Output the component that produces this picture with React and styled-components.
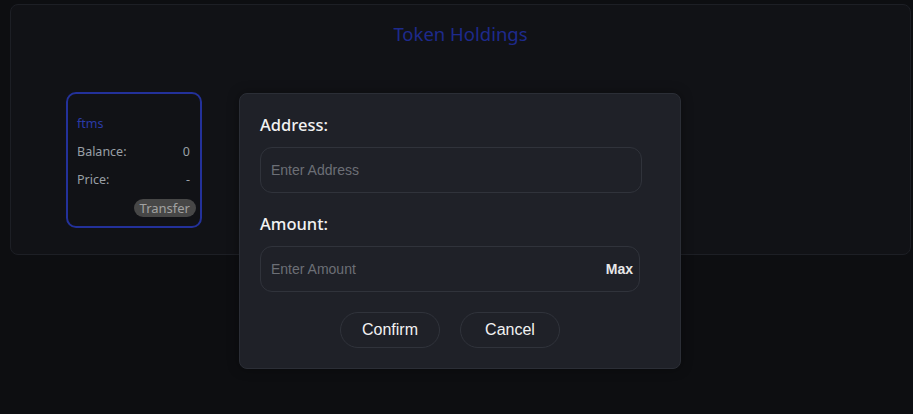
import React from "react";
import styled, { createGlobalStyle } from "styled-components";

const Global = createGlobalStyle`
  html, body { margin: 0; padding: 0; background: #0d0e11; }
  body { width: 913px; height: 414px; overflow: hidden; font-family: "Noto Sans", "Open Sans", sans-serif; }
  * { box-sizing: border-box; }
`;

const Page = styled.div`
  position: relative;
  width: 913px;
  height: 414px;
  padding: 4px 2px 0 10px;
`;

const Panel = styled.section`
  height: 251px;
  background: #111216;
  border: 1px solid #1d1f25;
  border-radius: 8px;
  padding: 15px 0 0 55px;
  display: flex;
  flex-direction: column;
`;

const Title = styled.h2`
  margin: 0 0 0 -55px;
  text-align: center;
  font-family: "Noto Sans", sans-serif;
  font-weight: 400;
  font-size: 18.5px;
  line-height: 28px;
  color: #1e2a8c;
`;

const Grid = styled.div`
  display: flex;
  gap: 20px;
  margin-top: 44px;
`;

const Card = styled.div`
  width: 136px;
  height: 136px;
  border: 2px solid #23319a;
  border-radius: 10px;
  padding: 15px 4px 0 9px;
  display: flex;
  flex-direction: column;
`;

const TokenName = styled.div`
  font-size: 12.5px;
  line-height: 29px;
  color: #2a3aa6;
  padding-right: 6px;
`;

const InfoRow = styled.div`
  display: flex;
  justify-content: space-between;
  font-size: 12.5px;
  line-height: 28px;
  color: #9aa0a6;
  padding-right: 6px;
`;

const ActionRow = styled.div`
  display: flex;
  justify-content: flex-end;
  align-items: center;
  height: 27px;
`;

const SmallButton = styled.button`
  border: none;
  background: #474747;
  color: #a2a2a2;
  font-family: "Noto Sans", sans-serif;
  font-size: 13px;
  line-height: 18px;
  height: 18px;
  padding: 0 6px;
  border-radius: 9px;
`;

const Modal = styled.div`
  position: absolute;
  left: 239px;
  top: 93px;
  width: 442px;
  height: 276px;
  background: #1f2128;
  border: 1px solid #2b2e36;
  border-radius: 8px;
  box-shadow: 0 0 12px rgba(0, 0, 0, 0.35);
  padding: 19px 20px 0 20px;
  display: flex;
  flex-direction: column;
`;

const Label = styled.label`
  font-family: "Noto Sans", sans-serif;
  font-weight: 500;
  font-size: 16.5px;
  line-height: 24px;
  color: #f2f2f2;
  margin-bottom: ${(p) => p.$gap}px;
`;

const Field = styled.div`
  width: ${(p) => p.$width}px;
  height: 46px;
  border: 1px solid #30333b;
  border-radius: 12px;
  display: flex;
  align-items: center;
  padding: 0 6px 0 10px;
  margin-bottom: ${(p) => p.$gap}px;
`;

const Input = styled.input`
  flex: 1;
  min-width: 0;
  background: transparent;
  border: none;
  outline: none;
  color: #e6e6e6;
  caret-color: #e6e6e6;
  font-family: "Liberation Sans", Arial, sans-serif;
  font-size: 14px;
  padding: 0;
  &::placeholder { color: #6c6f76; }
`;

const MaxButton = styled.button`
  background: transparent;
  border: none;
  padding: 0;
  color: #e8e8e8;
  font-family: "Liberation Sans", Arial, sans-serif;
  font-weight: 700;
  font-size: 14px;
`;

const Actions = styled.div`
  width: 380px;
  display: flex;
  justify-content: center;
  gap: 20px;
`;

const PillButton = styled.button`
  width: 100px;
  height: 36px;
  border: 1px solid #30333b;
  border-radius: 18px;
  background: transparent;
  color: #f2f2f2;
  font-family: "Liberation Sans", Arial, sans-serif;
  font-size: 16px;
  padding: 0;
`;

export default function App() {
  return (
    <>
      <Global />
      <Page>
        <Panel>
          <Title>Token Holdings</Title>
          <Grid>
            <Card>
              <TokenName>ftms</TokenName>
              <InfoRow>
                <span>Balance:</span>
                <span>0</span>
              </InfoRow>
              <InfoRow>
                <span>Price:</span>
                <span>-</span>
              </InfoRow>
              <ActionRow>
                <SmallButton>Transfer</SmallButton>
              </ActionRow>
            </Card>
          </Grid>
        </Panel>
        <Modal>
          <Label $gap={10}>Address:</Label>
          <Field $width={382} $gap={19}>
            <Input autoFocus placeholder="Enter Address" />
          </Field>
          <Label $gap={10}>Amount:</Label>
          <Field $width={380} $gap={20}>
            <Input placeholder="Enter Amount" />
            <MaxButton>Max</MaxButton>
          </Field>
          <Actions>
            <PillButton>Confirm</PillButton>
            <PillButton>Cancel</PillButton>
          </Actions>
        </Modal>
      </Page>
    </>
  );
}
